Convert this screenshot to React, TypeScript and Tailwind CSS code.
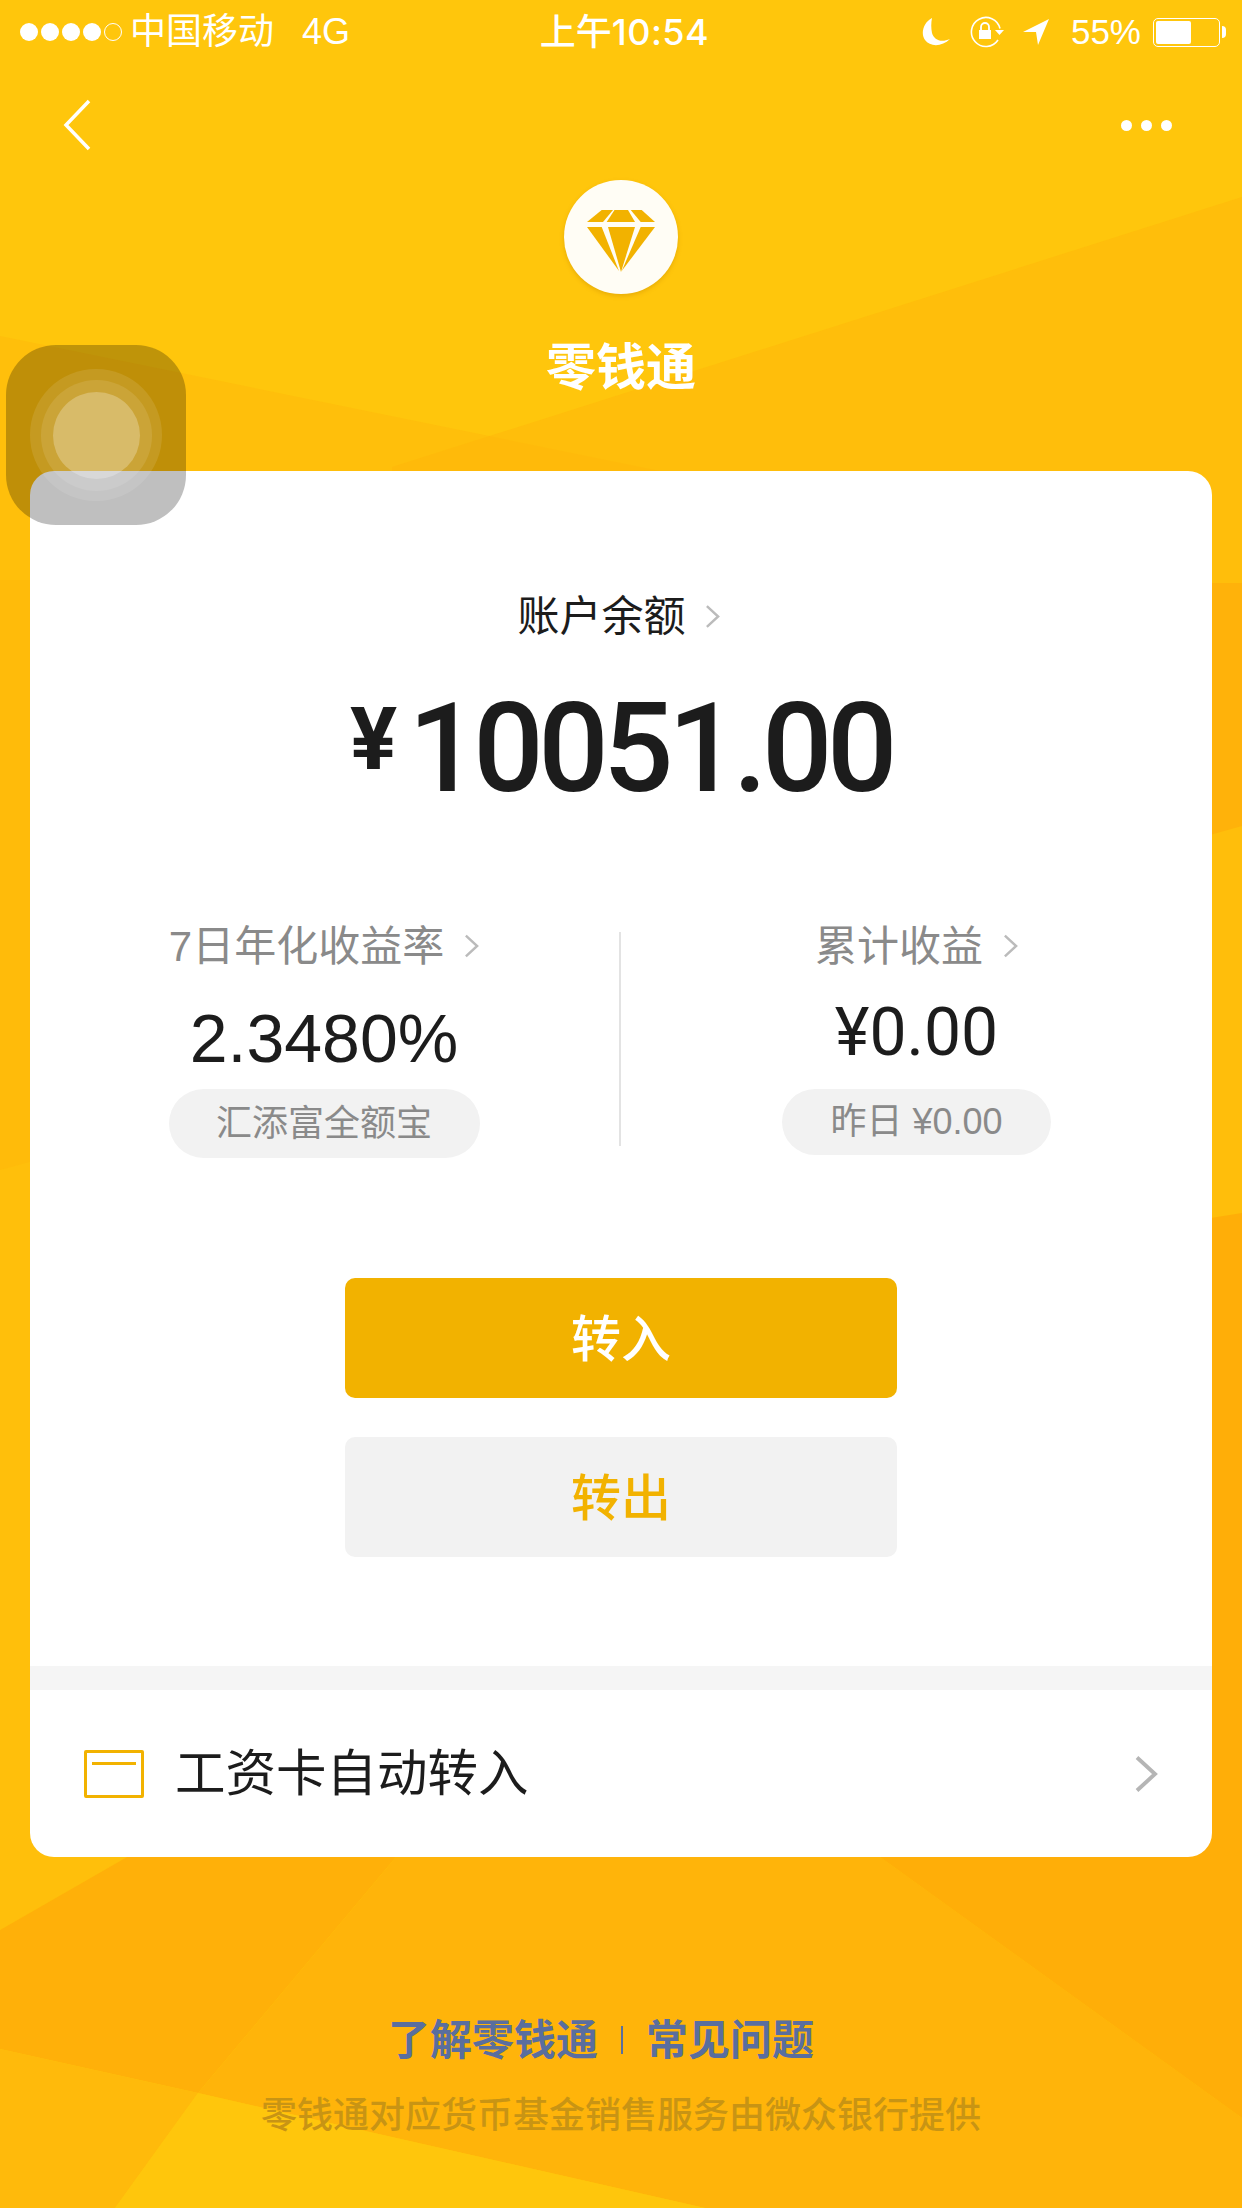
const Chevron = ({ className = '' }: { className?: string }) => (
  <svg viewBox="0 0 16 26" className={className} fill="none" stroke="currentColor" strokeWidth="2.6">
    <path d="M2 2l12 11L2 24" />
  </svg>
);

const Background = () => (
  <svg viewBox="0 0 1242 2208" className="absolute inset-0 w-[1242px] h-[2208px]">
    <rect width="1242" height="2208" fill="#ffc60c" />
    <polygon points="0,336 660,471 660,1857 127,1857 0,1930" fill="#ffb50a" fillOpacity="0.45" />
    <polygon points="1242,197 392,467 392,1857 1242,1857" fill="#ffb50a" fillOpacity="0.5" />
    <polygon points="0,580 620,580 620,1000 0,1170" fill="#ffb70a" fillOpacity="0.5" />
    <polygon points="620,583 1242,583 1242,826 620,1000" fill="#ffb20a" />
    <polygon points="1242,1213 700,1300 700,1857 1242,1857" fill="#ffae08" />
    <polygon points="0,1930 127,1857 396,1857 198,2093 0,2049" fill="#ffb009" />
    <polygon points="396,1857 880,1857 1242,2118 1242,2208 705,2208 198,2093" fill="#ffb40a" />
    <polygon points="880,1857 1242,1857 1242,2118" fill="#ffae08" />
    <polygon points="0,2049 198,2093 115,2208 0,2208" fill="#ffba0b" />
    <polygon points="198,2093 705,2208 115,2208" fill="#ffc60c" />
  </svg>
);

const StatusBar = () => (
  <div className="h-[64px] grid grid-cols-3 items-center text-white text-[36px] font-['Liberation_Sans','Noto_Sans_CJK_SC',sans-serif]">
    <div className="flex items-center pl-[20px]">
      <div className="flex gap-[3px]">
        <span className="w-[18px] h-[18px] rounded-full bg-white" />
        <span className="w-[18px] h-[18px] rounded-full bg-white" />
        <span className="w-[18px] h-[18px] rounded-full bg-white" />
        <span className="w-[18px] h-[18px] rounded-full bg-white" />
        <span className="w-[18px] h-[18px] rounded-full border border-white" />
      </div>
      <span className="ml-[8px] whitespace-nowrap">中国移动</span>
      <span className="ml-[28px]">4G</span>
    </div>
    <div className="pl-[7px] text-center whitespace-nowrap font-medium">
      上午<span className="font-['Inter',sans-serif] tracking-[0.5px]">10:54</span>
    </div>
    <div className="flex items-center justify-end pr-[16px]">
      <svg viewBox="0 0 28 28" className="w-[28px] h-[28px] mr-[20px]" fill="#fff">
        <path d="M10 0C2 4-2 15 3 22c5 7 17 7 25-1-9 4-16 1-18-6C9 10 9 5 10 0z" />
      </svg>
      <svg viewBox="0 0 38 32" className="w-[38px] h-[32px] mr-[15px]" fill="none" stroke="#fff" strokeWidth="1.6">
        <path d="M30 12.5A14.5 14.5 0 1 0 28 24" />
        <rect x="9" y="14" width="12" height="9" fill="#fff" stroke="none" />
        <path d="M11 14v-3a4 4 0 0 1 8 0v3" strokeWidth="1.8" />
        <path d="M25 14h9l-4.5 5z" fill="#fff" stroke="none" />
      </svg>
      <svg viewBox="0 0 26 26" className="w-[26px] h-[26px] mr-[22px]" fill="#fff">
        <path d="M0 13L26 0 15 26l-2-13z" />
      </svg>
      <span className="text-[35px]">55%</span>
      <div className="ml-[12px] w-[67px] h-[29px] rounded-[5px] border border-white p-[2px]">
        <div className="w-[35px] h-full bg-white rounded-[2px]" />
      </div>
      <span className="ml-[2px] w-[4px] h-[12px] bg-white rounded-r-full" />
    </div>
  </div>
);

const NavBar = () => (
  <div className="h-[72px] mt-[25px] pl-[63px] pr-[70px] flex items-center justify-between text-white">
    <svg viewBox="0 0 28 52" className="w-[28px] h-[52px]" fill="none" stroke="#fff" strokeWidth="3.5">
      <path d="M26 2L3 26l23 24" />
    </svg>
    <div className="flex gap-[9px]">
      <span className="w-[11px] h-[11px] rounded-full bg-white" />
      <span className="w-[11px] h-[11px] rounded-full bg-white" />
      <span className="w-[11px] h-[11px] rounded-full bg-white" />
    </div>
  </div>
);

const Diamond = () => (
  <svg viewBox="0 0 114 114" className="w-[114px] h-[114px]" fill="#f2b200">
    <polygon points="23,42 37.7,30 49,30 39,42" />
    <polygon points="50.5,30 64,30 71,42 42.7,42" />
    <polygon points="66.7,30 77.7,30 91,42 76.7,42" />
    <polygon points="23,47 37.7,47 55,91" />
    <polygon points="44,47 71,47 57,92" />
    <polygon points="76.7,47 91,47 57.7,91" />
  </svg>
);

const AssistiveTouch = () => (
  <div className="absolute left-[6px] top-[345px] w-[180px] h-[180px] rounded-[50px] bg-black/25 flex items-center justify-center">
    <div className="w-[132px] h-[132px] rounded-full bg-white/10 flex items-center justify-center">
      <div className="w-[111px] h-[111px] rounded-full bg-white/10 flex items-center justify-center">
        <div className="w-[87px] h-[87px] rounded-full bg-white/25" />
      </div>
    </div>
  </div>
);

export default function App() {
  return (
    <div className="relative w-[1242px] h-[2208px] overflow-hidden font-['Liberation_Sans','Noto_Sans_CJK_SC',sans-serif]">
      <Background />
      <div className="relative flex flex-col">
        <StatusBar />
        <NavBar />
        <div className="flex justify-center mt-[19px]">
          <div className="w-[114px] h-[114px] rounded-full bg-[#fffdf5] shadow-[0_2px_4px_rgba(190,130,0,0.35)]">
            <Diamond />
          </div>
        </div>
        <div className="mt-[40px] h-[68px] leading-[68px] text-center text-white text-[50px] font-bold">零钱通</div>

        <div className="mx-[30px] mt-[69px] h-[1386px] bg-white rounded-[24px] flex flex-col overflow-hidden">
          <div className="mt-[115px] h-[60px] pr-[5px] flex items-center justify-center text-[42px] text-[#1c1c1c]">
            账户余额
            <Chevron className="ml-[19px] w-[15px] h-[25px] text-[#bbbbbb]" />
          </div>
          <div className="mt-[43px] h-[120px] flex items-start justify-center text-[#1c1c1c] font-['Roboto',sans-serif] font-medium">
            <span className="text-[88px] leading-[100px] mr-[11px] font-bold">¥</span>
            <span className="text-[124px] leading-[120px] tracking-[-5.5px]">10051.00</span>
          </div>

          <div className="mt-[101px] flex items-start">
            <div className="w-[589px] flex flex-col items-center pt-[11px] pl-[23px] pr-[24px]">
              <div className="h-[50px] flex items-center text-[42px] text-[#8a8a8a]">
                7日年化收益率
                <Chevron className="ml-[20px] w-[15px] h-[26px] text-[#bbbbbb]" />
              </div>
              <div className="mt-[25px] h-[84px] leading-[84px] text-[68px] text-[#1c1c1c]">2.3480%</div>
              <div className="mt-[9px] w-[311px] h-[69px] rounded-full bg-[#f2f2f2] flex items-center justify-center text-[36px] text-[#8a8a8a]">
                汇添富全额宝
              </div>
            </div>
            <div className="w-[2px] h-[214px] mt-[22px] bg-[#e3e3e3]" />
            <div className="flex-1 flex flex-col items-center pt-[11px]">
              <div className="h-[50px] flex items-center text-[42px] text-[#8a8a8a]">
                累计收益
                <Chevron className="ml-[20px] w-[15px] h-[26px] text-[#bbbbbb]" />
              </div>
              <div className="mt-[20px] h-[84px] leading-[84px] text-[66px] text-[#1c1c1c] font-['Roboto',sans-serif]">¥0.00</div>
              <div className="mt-[14px] w-[269px] h-[66px] rounded-full bg-[#f2f2f2] flex items-center justify-center text-[36px] text-[#8a8a8a] whitespace-nowrap">
                昨日 ¥0.00
              </div>
            </div>
          </div>

          <div className="mt-[120px] flex flex-col items-center gap-[39px] text-[50px] font-medium">
            <button className="w-[552px] h-[120px] pt-[4px] rounded-[10px] bg-[#f2b200] text-white">转入</button>
            <button className="w-[552px] h-[120px] pt-[4px] rounded-[10px] bg-[#f2f2f2] text-[#f2b200]">转出</button>
          </div>

          <div className="mt-[109px] h-[24px] bg-[#f5f5f5]" />

          <div className="flex-1 flex items-center px-[54px]">
            <div className="w-[60px] h-[48px] border-[3px] border-[#f2b200] rounded-[2px] pt-[9px] px-[5px]">
              <div className="h-[3px] w-[44px] bg-[#f2b200]" />
            </div>
            <span className="ml-[31px] text-[50.5px] text-[#1c1c1c] whitespace-nowrap">工资卡自动转入</span>
            <Chevron className="ml-auto w-[24px] h-[40px] text-[#b5b5b5]" />
          </div>
        </div>

        <div className="mt-[153px] h-[60px] pr-[40px] flex items-center justify-center text-[42px] font-bold text-[#5a6e9e]">
          <span>了解零钱通</span>
          <span className="w-[2px] h-[28px] bg-[#5a6e9e] mx-[23px]" />
          <span>常见问题</span>
        </div>
        <div className="mt-[19px] text-center text-[36px] font-medium text-[#c89414] whitespace-nowrap">
          零钱通对应货币基金销售服务由微众银行提供
        </div>
      </div>
      <AssistiveTouch />
    </div>
  );
}
